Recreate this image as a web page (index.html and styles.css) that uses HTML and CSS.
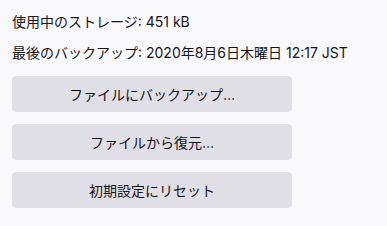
FILE: index.html
```html
<!DOCTYPE html>
<html>
  <head>
    <meta charset="utf-8">
    <link rel="stylesheet" href="styles.css">
  </head>
  <body>
    <div class="storage-info">
      <div class="info-line">使用中のストレージ: 451 kB</div>
      <div class="info-line">最後のバックアップ: 2020年8月6日木曜日 12:17 JST</div>
    </div>
    <div class="actions">
      <button class="btn">ファイルにバックアップ…</button>
      <button class="btn">ファイルから復元…</button>
      <button class="btn">初期設定にリセット</button>
    </div>
  </body>
</html>
```

FILE: styles.css
```css
body {
  font-family: Inter, 'Noto Sans CJK JP', sans-serif;
  font-size: 14px;
  margin: 0;
  padding: 0 12px;
  background-color: #f9f9fb;
  color: #15141a;
}
.storage-info {
  padding-top: 12px;
}
.info-line {
  line-height: 20px;
  margin-bottom: 11px;
}
.actions {
  display: flex;
  flex-direction: column;
  gap: 12px;
  width: 280px;
  margin-top: 13px;
}
.btn {
  font-family: inherit;
  font-size: 14px;
  color: #15141a;
  background-color: #e0dfe5;
  border: none;
  border-radius: 4px;
  height: 36px;
  padding: 0 12px;
}
```
